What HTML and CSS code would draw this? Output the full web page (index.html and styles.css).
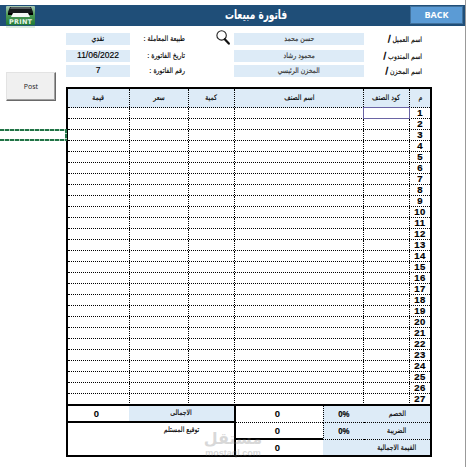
FILE: index.html
```
<!DOCTYPE html>
<html lang="ar">

<head>
  <meta charset="UTF-8" />
  <meta name="viewport" content="width=device-width, initial-scale=1.0" />
  <title>فاتورة مبيعات</title>
  <link rel="stylesheet" href="styles.css">
</head>

<body>
  <div class="sheet">
    <header class="top-bar">
      <svg class="print-icon" width="30" height="24" viewBox="0 0 30 24">
        <defs>
          <linearGradient id="green" x1="0" y1="0" x2="0" y2="1">
            <stop offset="0" stop-color="#a9c9b4" />
            <stop offset="0.45" stop-color="#4f9a58" />
            <stop offset="1" stop-color="#1f7a35" />
          </linearGradient>
        </defs>
        <rect x="0" y="1" width="29" height="19" rx="1" fill="url(#green)" />
        <path d="M4 2h21l2 5v3H2V7z" fill="#15191b" />
        <path d="M5 2h19l1 2H4z" fill="#555b5e" />
        <path d="M2 8h25v2H2z" fill="#000" />
        <path d="M7 8h15l2 4H5z" fill="#f4f8f5" />
        <rect x="0" y="20" width="29" height="3" fill="#4f9a58" opacity="0.18" />
        <text x="14.5" y="18.6" text-anchor="middle" textLength="23">PRINT</text>
      </svg>
      <h1 dir="rtl">فاتورة مبيعات</h1>
      <button class="back">BACK</button>
    </header>

    <div class="workspace">
      <aside>
        <button class="post">Post</button>
      </aside>

      <main>
        <section class="info" dir="rtl">
          <span class="label">اسم العميل <b>/</b></span>
          <span class="field"><i>حسن محمد</i></span>
          <svg class="search" width="14" height="15" viewBox="0 0 14 15">
            <circle cx="5.6" cy="5.4" r="4.7" fill="#fff" stroke="#222" stroke-width="1.1" />
            <path d="M8.8 9.2l4 4.4" stroke="#111" stroke-width="2.2" stroke-linecap="round" />
          </svg>
          <span class="label second">طبيعة المعاملة :</span>
          <span class="field short"><i>نقدي</i></span>

          <span class="label">اسم المندوب <b>/</b></span>
          <span class="field"><i>محمود رشاد</i></span>
          <span class="label second">تاريخ الفاتورة :</span>
          <span class="field short num">11/06/2022</span>

          <span class="label">اسم المخزن <b>/</b></span>
          <span class="field"><i>المخزن الرئيسي</i></span>
          <span class="label second">رقم الفاتورة :</span>
          <span class="field short num">7</span>
        </section>

        <section class="invoice">
          <div class="row head">
            <span><i>قيمة</i></span>
            <span><i>سعر</i></span>
            <span><i>كمية</i></span>
            <span><i>اسم الصنف</i></span>
            <span><i>كود الصنف</i></span>
            <span><i>م</i></span>
          </div>
          <div id="rows"></div>

          <div class="totals">
            <div class="totals-left">
              <div class="sum">
                <b>0</b>
                <span dir="rtl"><i>الاجمالى</i></span>
              </div>
              <div class="sign" dir="rtl"><i>توقيع المستلم</i></div>
            </div>
            <div class="totals-right">
              <b class="amount">0</b><b class="percent"><i>0%</i></b><span class="name"><i>الخصم</i></span>
              <b class="amount thick">0</b><b class="percent"><i>0%</i></b><span class="name"><i>الضريبة</i></span>
              <b class="amount last">0</b><span class="name wide"><i>القيمة الاجمالية</i></span>
            </div>
          </div>
        </section>
      </main>
    </div>

    <div class="copy-range"></div>
    <div class="watermark">
      <div class="mark-ar">مستقل</div>
      <div class="mark-en">mostaql.com</div>
    </div>
  </div>

  <script>
    const rows = document.getElementById('rows');
    for (let i = 1; i <= 27; i++) {
      const row = document.createElement('div');
      row.className = 'row';
      row.innerHTML = '<span></span><span></span><span></span><span></span><span></span><b>' + i + '</b>';
      rows.appendChild(row);
    }
    rows.firstChild.children[4].classList.add('active');
  </script>
</body>

</html>
```

FILE: styles.css
```
* {
  box-sizing: border-box;
}

body {
  margin: 0;
  background: #fff;
  color: #000;
  font-family: "DejaVu Sans", sans-serif;
  font-size: 7.5px;
  overflow: hidden;
}

/* narrow arabic lettering */
i {
  display: inline-block;
  font-style: normal;
  white-space: nowrap;
  transform: scaleX(0.82);
  -webkit-text-stroke: 0.15px;
}

.sheet {
  position: relative;
  width: 466px;
  height: 467px;
  padding-top: 5px;
  border-right: 1px solid #999;
}

.top-bar {
  display: flex;
  align-items: flex-start;
  justify-content: space-between;
  height: 21px;
  padding: 0 2px 0 6px;
  background: #1f4e78;
}

.print-icon {
  flex: none;
}

.print-icon text {
  font: bold 6.5px "DejaVu Sans", sans-serif;
  fill: #e6f5e8;
}

h1 {
  margin: 0 0 0 66px;
  font-size: 13px;
  line-height: 20px;
  color: #fff;
  white-space: nowrap;
  transform: scaleX(0.69);
}

.back {
  width: 53px;
  height: 18px;
  margin-top: 1px;
  padding: 0 0 2px;
  border: 1px solid #41719c;
  background: #5b9bd5;
  color: #fff;
  font: bold 9px "Open Sans", sans-serif;
}

.workspace {
  display: flex;
}

aside {
  width: 66px;
  padding: 46px 0 0 6px;
}

.post {
  width: 50px;
  height: 29px;
  padding: 0;
  border: 1px solid;
  border-color: #e3e3e3 #696969 #696969 #e3e3e3;
  box-shadow: inset -1px -1px #a0a0a0;
  background: #f0f0f0;
  color: #222;
  font: 7px "Open Sans", sans-serif;
}

main {
  width: 366px;
  padding-top: 7px;
}

.info {
  display: grid;
  grid-template-columns: 68px 130px 49px 55px 64px;
  grid-template-rows: 14px 12px 12px;
  row-gap: 3px;
  align-items: start;
  height: 54px;
}

.info > * {
  line-height: 12px;
  white-space: nowrap;
}

.label {
  grid-column: 1;
  height: 12px;
  margin-right: 10px;
  transform: scaleX(0.82);
  transform-origin: right;
  -webkit-text-stroke: 0.15px;
}

.label b {
  font-size: 8.5px;
  -webkit-text-stroke: 0.5px;
}

.label.second {
  grid-column: 3 / 5;
  margin-right: 49px;
}

.field {
  grid-column: 2;
  height: 12px;
  background: #ddebf7;
  color: #333;
  text-align: center;
}

.field.short {
  grid-column: 5;
  color: #000;
}

.num {
  font: 8.5px "Liberation Sans", sans-serif;
  -webkit-text-stroke: 0.15px #000;
}

.search {
  grid-column: 3;
  grid-row: 1;
  margin-top: -3px;
  margin-right: 4px;
}

.label.second,
.field.short {
  grid-row: 1;
}

.field.short ~ .label.second,
.field.short ~ .field.short {
  grid-row: 2;
}

.field.short ~ .field.short ~ .label.second,
.field.short ~ .field.short ~ .field.short {
  grid-row: 3;
}

.invoice {
  width: 366px;
  height: 370px;
  border: 2px solid #000;
}

.row {
  display: grid;
  grid-template-columns: 62px 59px 46px 129px 46px 20px;
  height: 11px;
  border-bottom: 1px dotted #000;
}

.row > * {
  border-right: 1px dotted #000;
  text-align: center;
}

.row > :last-child {
  border-right: 0;
}

.row b {
  font: bold 9.5px/9px "Liberation Sans", sans-serif;
  letter-spacing: 0.4px;
  -webkit-text-stroke: 0.2px;
}

.row:last-child {
  border-bottom: 0;
}

.head {
  height: 19px;
  background: #ddebf7;
  line-height: 17px;
}

.row .active {
  margin: -1px 0 -1px -1px;
  border: 1px solid #6a64a4;
}

.totals {
  display: flex;
  height: 51px;
  border-top: 2px solid #000;
  margin-top: -1px;
}

.totals b {
  font: bold 9.5px/15px "Liberation Sans", sans-serif;
  text-align: center;
}

.totals-left {
  width: 168px;
  border-right: 2px solid #000;
}

.sum {
  display: grid;
  grid-template-columns: 61px 105px;
  height: 17px;
  border-bottom: 2px solid #000;
}

.sum b,
.totals .amount {
  padding-right: 4px;
}

.sum span {
  background: #ddebf7;
  line-height: 14px;
  text-align: center;
}

.sign {
  padding-right: 35px;
  line-height: 14px;
}

.sign i {
  transform-origin: right;
}

.totals-right {
  display: grid;
  grid-template-columns: 87px 41px 66px;
  grid-template-rows: 17px 17px 15px;
}

.totals-right > * {
  border-bottom: 1px dotted #000;
  text-align: center;
}

.totals-right .percent,
.totals-right .name {
  background: #ddebf7;
  line-height: 15px;
}

.totals-right .percent {
  border-left: 1px dotted #000;
}

.totals-right .thick {
  border-bottom: 2px solid #000;
}

.totals-right .last,
.totals-right .wide {
  border-bottom: 0;
}

.totals-right .wide {
  grid-column: 2 / 4;
  padding-left: 40px;
}

/* marching-ants range marker, sits over the table edge */
.copy-range {
  --ants-x: repeating-linear-gradient(90deg, #217346 0 4px, #b5d6c0 4px 5px);
  --ants-y: repeating-linear-gradient(#217346 0 4px, #b5d6c0 4px 5px);
  position: absolute;
  left: 0;
  top: 129px;
  width: 67px;
  height: 12px;
  background:
    var(--ants-x) top / 100% 2px no-repeat,
    var(--ants-x) bottom / 100% 2px no-repeat,
    var(--ants-y) right / 2px 100% no-repeat;
}

.watermark {
  position: absolute;
  left: 203px;
  top: 429px;
  width: 60px;
  color: #777;
  opacity: 0.28;
}

.watermark div {
  display: flex;
  justify-content: center;
}

.mark-ar {
  font: bold 16px/19px "DejaVu Sans", sans-serif;
}

.mark-en {
  font: bold 9px/10px "Liberation Sans", sans-serif;
}
```
